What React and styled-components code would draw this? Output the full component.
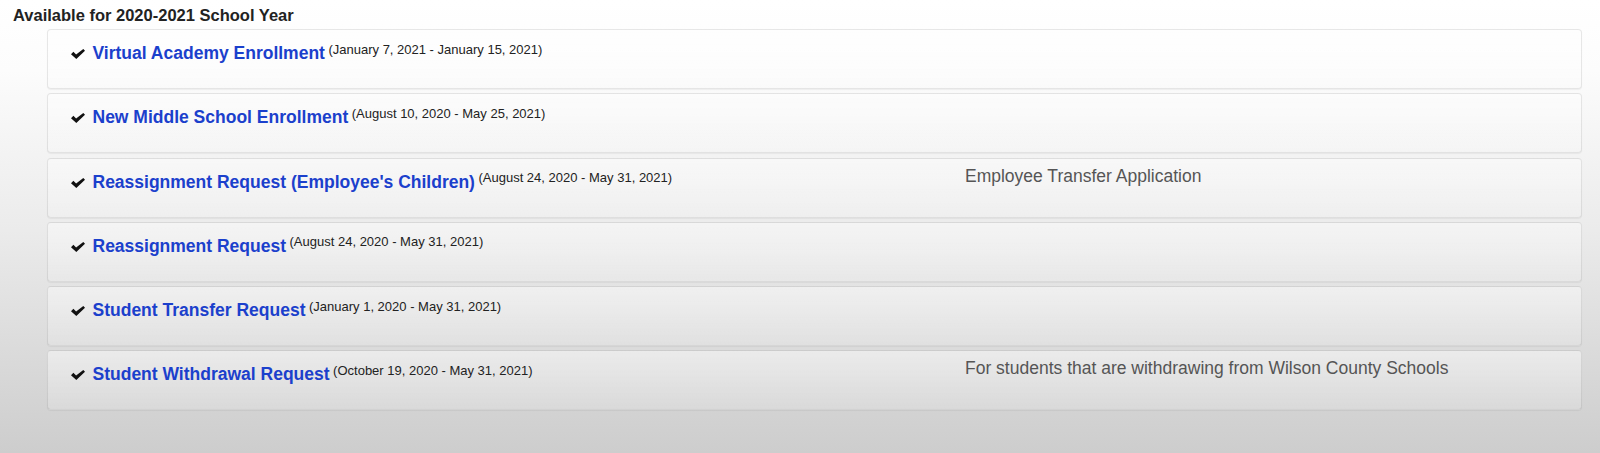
import React from "react";
import styled, { createGlobalStyle } from "styled-components";

const GlobalStyle = createGlobalStyle`
  html, body {
    margin: 0;
    padding: 0;
  }
  body {
    min-height: 100vh;
    background: linear-gradient(to bottom, #ffffff 0px, #fcfcfc 70px, #ebebeb 230px, #cdcdcd 453px);
    font-family: "Liberation Sans", Arial, Helvetica, sans-serif;
  }
`;

const Page = styled.div`
  padding: 6px 18px 0 13px;
`;

const Heading = styled.h2`
  margin: 0 0 4px;
  font-size: 16.5px;
  line-height: 19px;
  font-weight: bold;
  color: #222;
`;

const List = styled.div`
  margin-left: 34px;
  display: flex;
  flex-direction: column;
  gap: 4.3px;
`;

const Card = styled.div`
  box-sizing: border-box;
  height: 60px;
  padding: 7px 20px 0 23px;
  border: 1px solid rgba(0, 0, 0, 0.09);
  border-radius: 4px;
  background: linear-gradient(to bottom, rgba(255, 255, 255, 0.45), rgba(255, 255, 255, 0.15));
  box-shadow: 0 1px 1px rgba(0, 0, 0, 0.05);
  display: grid;
  grid-template-columns: 60% 1fr;
  align-items: start;
`;

const LinkLine = styled.div`
  padding-top: 6px;
  line-height: 20px;
  white-space: nowrap;
`;

const Check = styled.svg`
  width: 14px;
  height: 10px;
  margin-right: 7.5px;
  vertical-align: 0px;
  fill: #111;
`;

const Title = styled.a`
  font-size: 17.5px;
  font-weight: bold;
  color: #1b40cc;
  text-decoration: none;
`;

const Dates = styled.span`
  font-size: 13px;
  line-height: 0;
  color: #222;
  vertical-align: 5.5px;
  margin-left: 3.5px;
`;

const Description = styled.div`
  font-size: 17.5px;
  line-height: 20px;
  color: #555;
`;

const items = [
  { title: "Virtual Academy Enrollment", dates: "(January 7, 2021 - January 15, 2021)" },
  { title: "New Middle School Enrollment", dates: "(August 10, 2020 - May 25, 2021)" },
  {
    title: "Reassignment Request (Employee's Children)",
    dates: "(August 24, 2020 - May 31, 2021)",
    desc: "Employee Transfer Application",
  },
  { title: "Reassignment Request", dates: "(August 24, 2020 - May 31, 2021)" },
  { title: "Student Transfer Request", dates: "(January 1, 2020 - May 31, 2021)" },
  {
    title: "Student Withdrawal Request",
    dates: "(October 19, 2020 - May 31, 2021)",
    desc: "For students that are withdrawing from Wilson County Schools",
  },
];

function CheckIcon() {
  return (
    <Check viewBox="0 0 14 10" aria-hidden="true">
      <path d="M0 5.2 L2.4 2.8 L5.1 5.5 L12.3 0 L14 1.7 L5.3 10 Z" />
    </Check>
  );
}

export default function App() {
  return (
    <>
      <GlobalStyle />
      <Page>
        <Heading>Available for 2020-2021 School Year</Heading>
        <List>
          {items.map((it) => (
            <Card key={it.title}>
              <LinkLine>
                <CheckIcon />
                <Title href="#">{it.title}</Title>
                <Dates>{it.dates}</Dates>
              </LinkLine>
              <Description>{it.desc || ""}</Description>
            </Card>
          ))}
        </List>
      </Page>
    </>
  );
}
